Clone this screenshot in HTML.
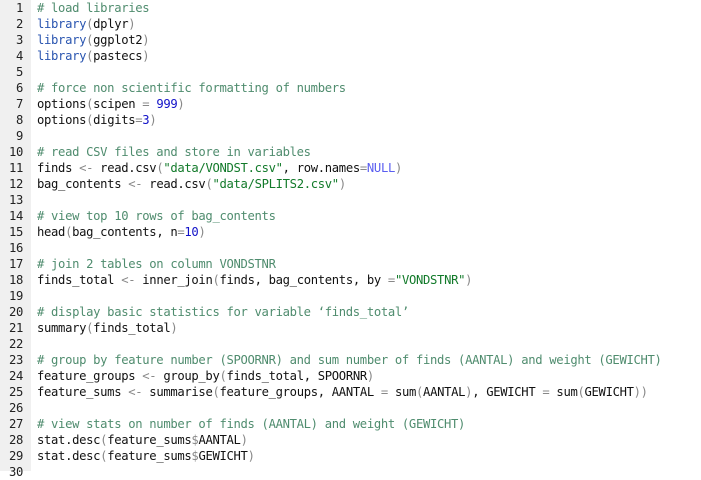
<!DOCTYPE html>
<html><head><meta charset="utf-8"><style>
html,body{margin:0;padding:0;background:#fff;width:701px;height:471px;overflow:hidden}
.g{position:absolute;left:0;top:0;width:31px;height:471px;background:#f0f0f0}
.w{position:absolute;left:0;top:0;font-family:"DejaVu Sans Mono","Liberation Mono",monospace;font-size:12.2px;letter-spacing:-0.32px;line-height:16px;color:#111}
.l{height:16px;white-space:pre;position:relative}
.n{position:absolute;left:0;width:23px;text-align:right;color:#222}
.t{position:absolute;left:37px}
.c{color:#4f8c6e}.f{color:#2a55b0}.s{color:#127a2a}.d{color:#1010c8}.o{color:#888}.k{color:#5a5ef0}
</style></head><body><div class="g"></div><div class="w">
<div class="l"><span class="n">1</span><span class="t"><span class="c"># load libraries</span></span></div>
<div class="l"><span class="n">2</span><span class="t"><span class="f">library</span><span class="o">(</span>dplyr<span class="o">)</span></span></div>
<div class="l"><span class="n">3</span><span class="t"><span class="f">library</span><span class="o">(</span>ggplot2<span class="o">)</span></span></div>
<div class="l"><span class="n">4</span><span class="t"><span class="f">library</span><span class="o">(</span>pastecs<span class="o">)</span></span></div>
<div class="l"><span class="n">5</span></div>
<div class="l"><span class="n">6</span><span class="t"><span class="c"># force non scientific formatting of numbers</span></span></div>
<div class="l"><span class="n">7</span><span class="t">options<span class="o">(</span>scipen <span class="o">=</span> <span class="d">999</span><span class="o">)</span></span></div>
<div class="l"><span class="n">8</span><span class="t">options<span class="o">(</span>digits<span class="o">=</span><span class="d">3</span><span class="o">)</span></span></div>
<div class="l"><span class="n">9</span></div>
<div class="l"><span class="n">10</span><span class="t"><span class="c"># read CSV files and store in variables</span></span></div>
<div class="l"><span class="n">11</span><span class="t">finds <span class="o">&lt;-</span> read.csv<span class="o">(</span><span class="s">"data/VONDST.csv"</span>, row.names<span class="o">=</span><span class="k">NULL</span><span class="o">)</span></span></div>
<div class="l"><span class="n">12</span><span class="t">bag_contents <span class="o">&lt;-</span> read.csv<span class="o">(</span><span class="s">"data/SPLITS2.csv"</span><span class="o">)</span></span></div>
<div class="l"><span class="n">13</span></div>
<div class="l"><span class="n">14</span><span class="t"><span class="c"># view top 10 rows of bag_contents</span></span></div>
<div class="l"><span class="n">15</span><span class="t">head<span class="o">(</span>bag_contents, n<span class="o">=</span><span class="d">10</span><span class="o">)</span></span></div>
<div class="l"><span class="n">16</span></div>
<div class="l"><span class="n">17</span><span class="t"><span class="c"># join 2 tables on column VONDSTNR</span></span></div>
<div class="l"><span class="n">18</span><span class="t">finds_total <span class="o">&lt;-</span> inner_join<span class="o">(</span>finds, bag_contents, by <span class="o">=</span><span class="s">"VONDSTNR"</span><span class="o">)</span></span></div>
<div class="l"><span class="n">19</span></div>
<div class="l"><span class="n">20</span><span class="t"><span class="c"># display basic statistics for variable ‘finds_total’</span></span></div>
<div class="l"><span class="n">21</span><span class="t">summary<span class="o">(</span>finds_total<span class="o">)</span></span></div>
<div class="l"><span class="n">22</span></div>
<div class="l"><span class="n">23</span><span class="t"><span class="c"># group by feature number (SPOORNR) and sum number of finds (AANTAL) and weight (GEWICHT)</span></span></div>
<div class="l"><span class="n">24</span><span class="t">feature_groups <span class="o">&lt;-</span> group_by<span class="o">(</span>finds_total, SPOORNR<span class="o">)</span></span></div>
<div class="l"><span class="n">25</span><span class="t">feature_sums <span class="o">&lt;-</span> summarise<span class="o">(</span>feature_groups, AANTAL <span class="o">=</span> sum<span class="o">(</span>AANTAL<span class="o">)</span>, GEWICHT <span class="o">=</span> sum<span class="o">(</span>GEWICHT<span class="o">))</span></span></div>
<div class="l"><span class="n">26</span></div>
<div class="l"><span class="n">27</span><span class="t"><span class="c"># view stats on number of finds (AANTAL) and weight (GEWICHT)</span></span></div>
<div class="l"><span class="n">28</span><span class="t">stat.desc<span class="o">(</span>feature_sums<span class="o">$</span>AANTAL<span class="o">)</span></span></div>
<div class="l"><span class="n">29</span><span class="t">stat.desc<span class="o">(</span>feature_sums<span class="o">$</span>GEWICHT<span class="o">)</span></span></div>
<div class="l"><span class="n">30</span></div>
</div></body></html>
